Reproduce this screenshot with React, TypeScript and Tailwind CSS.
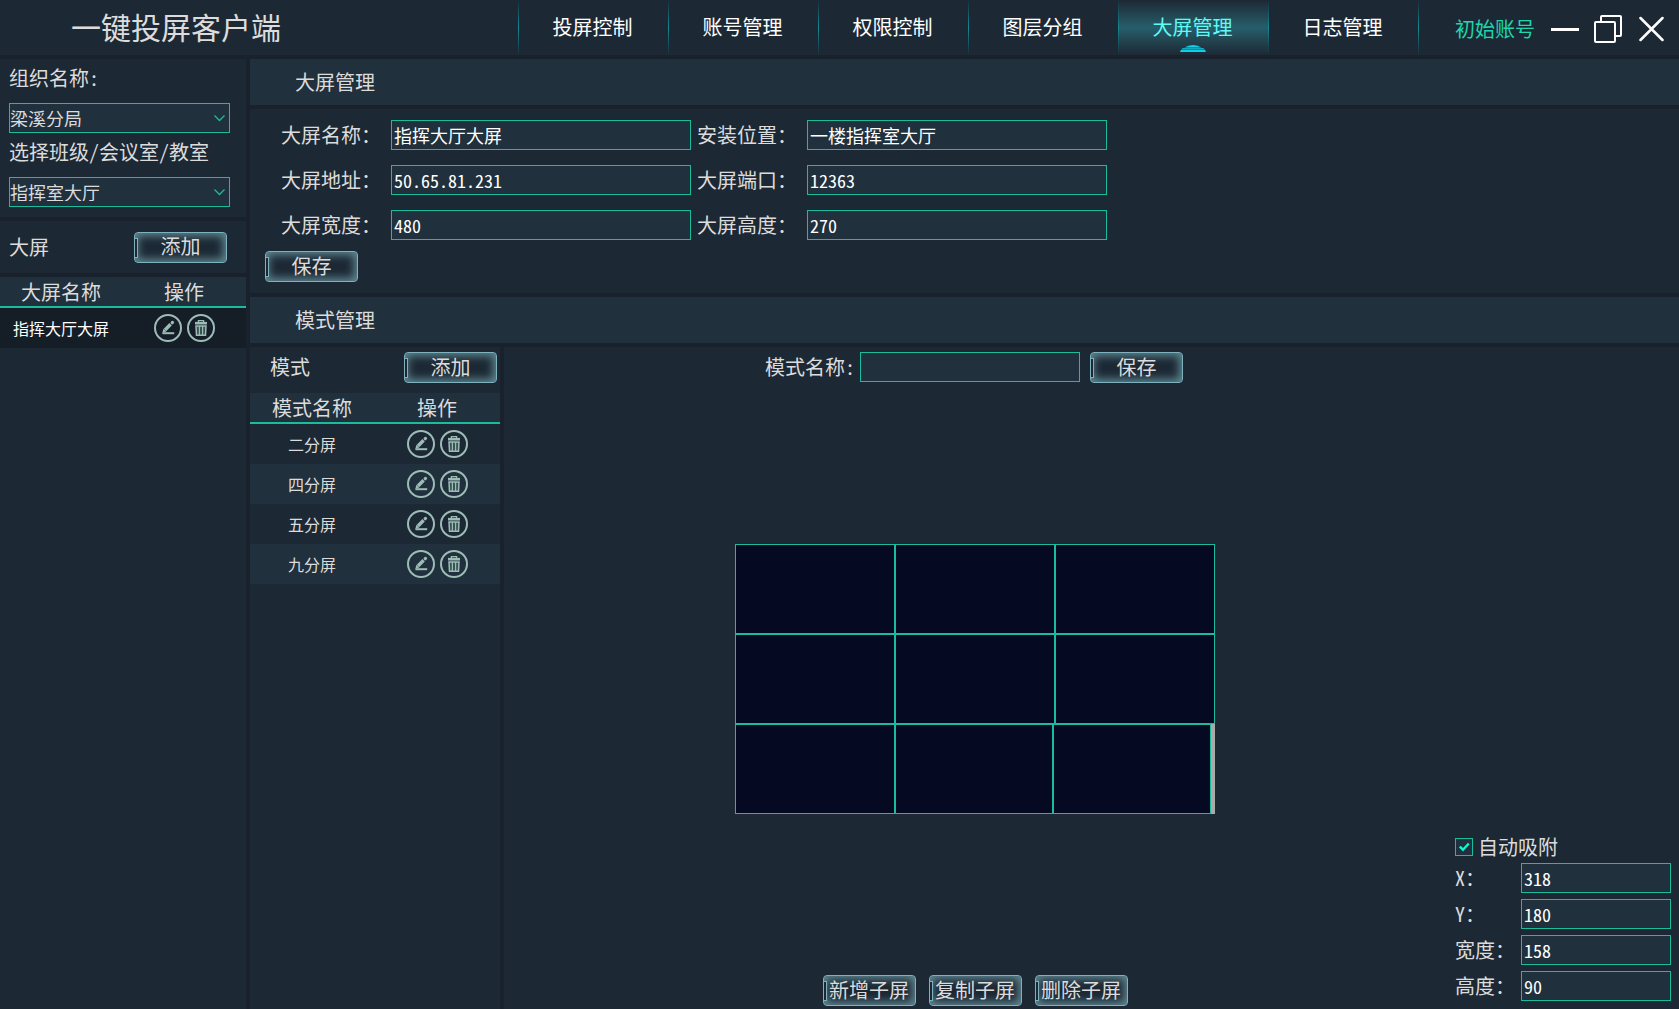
import { useState } from "react";
import type { ReactNode } from "react";
import clsx from "clsx";

const tabs = ["投屏控制", "账号管理", "权限控制", "图层分组", "大屏管理", "日志管理"];
const modes = ["二分屏", "四分屏", "五分屏", "九分屏"];

// widths of the sub screens, row by row
const wall = [
  [160, 160, 160],
  [160, 160, 160],
  [160, 158, 158],
];

function FrameButton({ children }: { children: ReactNode }) {
  return (
    <button
      type="button"
      className="relative h-[31px] w-[93px] shrink-0 whitespace-nowrap rounded-sm border border-[#7fb2bf] pb-0.5 text-[20px] leading-none shadow-[inset_0_0_9px_3px_#5f8791]"
    >
      <span className="absolute -left-px top-[5px] h-5 w-1 border border-[#7fb2bf] bg-[#1c2834]" />
      {children}
    </button>
  );
}

function EditIcon() {
  return (
    <svg width="28" height="28" viewBox="0 0 28 28" fill="none" stroke="#9dbcb6">
      <circle cx="14" cy="14" r="13" strokeWidth="2" />
      <path d="M8.4 19.2h11.8" strokeWidth="2" />
      <path d="M11 16l5.600-5.800" strokeWidth="3.400" />
      <path d="M18.200 8.700l.3-.3" strokeWidth="3.200" strokeLinecap="round" />
      <path d="M8.400 18.800l1-4 3 2.800z" fill="#9dbcb6" stroke="none" />
    </svg>
  );
}

function TrashIcon() {
  return (
    <svg width="28" height="28" viewBox="0 0 28 28" fill="none" stroke="#9dbcb6">
      <circle cx="14" cy="14" r="13" strokeWidth="2" />
      <path d="M8 9.2h12" strokeWidth="2.600" />
      <path d="M11.400 8.200V6.600h5.200v1.600" strokeWidth="1.300" />
      <path d="M9 11.900h10l-.5 9.300h-9z" strokeWidth="1.500" fill="#3a5256" />
      <path d="M12.400 12v9M15.600 12v9" strokeWidth="1.200" />
    </svg>
  );
}

function RowActions() {
  return (
    <div className="flex gap-[5px]">
      <button type="button" aria-label="编辑">
        <EditIcon />
      </button>
      <button type="button" aria-label="删除">
        <TrashIcon />
      </button>
    </div>
  );
}

function Field({ id, label, value }: { id: string; label: string; value: string }) {
  return (
    <div className="flex h-[30px] items-center">
      <label htmlFor={id} className="w-[110px] shrink-0 text-[20px]">
        {label}
      </label>
      <input
        id={id}
        defaultValue={value}
        className="h-[30px] w-[300px] border border-[#1abc9c] bg-[#20303d] px-0.5 text-[18px] text-white outline-none"
      />
    </div>
  );
}

function SideSelect({ id, label, value }: { id: string; label: string; value: string }) {
  return (
    <div className="flex flex-col">
      <label htmlFor={id} className="flex h-11 items-center pb-1.5 text-[20px]">
        {label}
      </label>
      <div className="relative">
        <select
          id={id}
          className="h-[30px] w-full appearance-none border border-[#1abc9c] bg-[#20303d] text-[18px] outline-none"
        >
          <option>{value}</option>
        </select>
        <svg className="pointer-events-none absolute right-[5px] top-3" width="11" height="7" fill="none" stroke="#1abc9c" strokeWidth="1.300">
          <path d="M.5.5l5 5 5-5" />
        </svg>
      </div>
    </div>
  );
}

function SectionTitle({ children }: { children: ReactNode }) {
  return (
    <h2 className="flex h-[46px] items-center bg-[#20303d] pl-[45px] text-[20px]">{children}</h2>
  );
}

export default function App() {
  const [snap, setSnap] = useState(true);

  return (
    <div className="flex min-h-screen flex-col gap-1 bg-[#19222c] font-['Noto_Sans_Mono_CJK_SC','Noto_Sans_CJK_SC',sans-serif] font-light leading-none text-[#dcdcdc]">
      <header className="flex h-[55px] items-center bg-[#1c2935]">
        <h1 className="flex-1 pb-1 pl-[71px] text-[30px]">一键投屏客户端</h1>
        <nav className="flex h-full text-[20px] text-white">
          {tabs.map((tab) => (
            <a
              key={tab}
              href="#"
              className={clsx(
                "relative flex w-[150px] items-center justify-center border-l pb-0.5 pr-0.5 [border-image:linear-gradient(#1c2935,#128a94,#1c2935)_1]",
                tab === "大屏管理" &&
                  "bg-linear-to-b from-[#1c2935] via-[#245f6b] to-[#1c2935] text-[#5ffaf5]"
              )}
            >
              {tab}
              {tab === "大屏管理" && (
                <svg className="absolute bottom-[3px] left-[61px]" width="26" height="7" viewBox="0 0 26 7" fill="#10d0e8">
                  <path d="M4.500 2.500Q8 0 13 0t8.500 2.500zM2.500 3.200h21l1 1h-23zM1 4.800h24l1 2.200H0z" />
                </svg>
              )}
            </a>
          ))}
        </nav>
        <div className="flex h-full w-[261px] items-center border-l pl-9 pt-0.5 [border-image:linear-gradient(#1c2935,#128a94,#1c2935)_1]">
          <span className="text-[20px] text-[#1fd6ae]">初始账号</span>
          <button type="button" aria-label="最小化" className="ml-4">
            <svg width="28" height="28" stroke="#fff" strokeWidth="3">
              <path d="M0 14.500h28" />
            </svg>
          </button>
          <button type="button" aria-label="还原" className="ml-[15px]">
            <svg width="28" height="28" fill="none" stroke="#fff" strokeWidth="2">
              <rect x="1" y="7" width="20" height="20" rx="1" />
              <path d="M7 7V2q0-1 1-1h18q1 0 1 1v18q0 1-1 1h-5" />
            </svg>
          </button>
          <button type="button" aria-label="关闭" className="ml-[17px]">
            <svg width="25" height="26" stroke="#fff" strokeWidth="2.500" strokeLinecap="round">
              <path d="M1.500 2l22 22M23.500 2l-22 22" />
            </svg>
          </button>
        </div>
      </header>

      <div className="flex flex-1 gap-1">
        <aside className="flex w-[246px] shrink-0 flex-col gap-1">
          <div className="h-[158px] bg-[#1c2935] pl-[9px] pr-4">
            <SideSelect id="org" label="组织名称:" value="梁溪分局" />
            <SideSelect id="room" label="选择班级/会议室/教室" value="指挥室大厅" />
          </div>
          <div className="flex h-[52px] items-center justify-between bg-[#1c2935] pl-[9px] pr-[19px] text-[20px]">
            大屏
            <FrameButton>添加</FrameButton>
          </div>
          <div className="flex-1 bg-[#1c2935]">
            <table className="w-full table-fixed border-separate border-spacing-0">
              <thead>
                <tr className="bg-[#20303d] text-left text-[20px]">
                  <th className="h-[31px] w-[154px] border-b-2 border-[#1abc9c] pl-[21px] font-light">
                    大屏名称
                  </th>
                  <th className="border-b-2 border-[#1abc9c] pl-[10px] font-light">操作</th>
                </tr>
              </thead>
              <tbody>
                <tr className="h-10 bg-[#151e27] text-[16px] text-white">
                  <td className="pl-[13px]">指挥大厅大屏</td>
                  <td>
                    <RowActions />
                  </td>
                </tr>
              </tbody>
            </table>
          </div>
        </aside>

        <main className="flex min-w-0 flex-1 flex-col gap-1">
          <SectionTitle>大屏管理</SectionTitle>
          <form className="h-[184px] bg-[#1c2935] pt-[11px]">
            <div className="grid grid-cols-[410px_410px] gap-x-1.5 gap-y-[15px] pl-[31px]">
              <Field id="name" label="大屏名称：" value="指挥大厅大屏" />
              <Field id="place" label="安装位置：" value="一楼指挥室大厅" />
              <Field id="addr" label="大屏地址：" value="50.65.81.231" />
              <Field id="port" label="大屏端口：" value="12363" />
              <Field id="w" label="大屏宽度：" value="480" />
              <Field id="h" label="大屏高度：" value="270" />
            </div>
            <div className="pl-[15px] pt-[11px]">
              <FrameButton>保存</FrameButton>
            </div>
          </form>
          <SectionTitle>模式管理</SectionTitle>

          <div className="flex flex-1 gap-1">
            <section className="w-[250px] shrink-0 bg-[#1c2935]">
              <div className="flex h-[46px] items-start justify-between pl-5 pr-[3px] pt-[5px] text-[20px]">
                <span className="leading-[30px]">模式</span>
                <FrameButton>添加</FrameButton>
              </div>
              <table className="w-full table-fixed border-separate border-spacing-0">
                <thead>
                  <tr className="bg-[#20303d] text-left text-[20px]">
                    <th className="h-[31px] w-[157px] border-b-2 border-[#1abc9c] pl-[22px] font-light">
                      模式名称
                    </th>
                    <th className="border-b-2 border-[#1abc9c] pl-[10px] font-light">操作</th>
                  </tr>
                </thead>
                <tbody>
                  {modes.map((mode) => (
                    <tr key={mode} className="h-10 text-[16px] even:bg-[#20303d]">
                      <td className="pl-[38px]">{mode}</td>
                      <td>
                        <RowActions />
                      </td>
                    </tr>
                  ))}
                </tbody>
              </table>
            </section>

            <section className="flex flex-1 bg-[#1c2935]">
              <div className="flex flex-1 flex-col items-center justify-between pb-[3px] pt-[5px]">
                <form className="flex items-start pr-0.5">
                  <label htmlFor="mode" className="w-[95px] text-[20px] leading-[30px]">
                    模式名称:
                  </label>
                  <input
                    id="mode"
                    className="mr-[10px] h-[30px] w-[220px] border border-[#1abc9c] bg-[#20303d] px-0.5 text-[18px] text-white outline-none"
                  />
                  <FrameButton>保存</FrameButton>
                </form>
                <div className="w-[480px] bg-[#a9a9a9]">
                  {wall.map((row, y) => (
                    <div key={y} className="flex h-[90px]">
                      {row.map((width, x) => (
                        <div key={x} className="border border-[#1abc9c] bg-[#050922]" style={{ width }} />
                      ))}
                    </div>
                  ))}
                </div>
                <div className="flex gap-[13px]">
                  <FrameButton>新增子屏</FrameButton>
                  <FrameButton>复制子屏</FrameButton>
                  <FrameButton>删除子屏</FrameButton>
                </div>
              </div>

              <div className="flex w-[233px] flex-col justify-end gap-1.5 pb-2 pl-[9px] pr-2">
                <label className="flex items-center gap-[5px] text-[20px]">
                  <span className="relative flex size-[18px]">
                    <input
                      type="checkbox"
                      checked={snap}
                      onChange={(e) => setSnap(e.target.checked)}
                      className="size-[18px] appearance-none border border-[#1abc9c] bg-[#20303d]"
                    />
                    {snap && (
                      <svg className="pointer-events-none absolute left-1 top-1" width="11" height="10" fill="none" stroke="#0ff5cd" strokeWidth="2.400">
                        <path d="M.8 4.500l3.200 3.200L9.800 1.500" />
                      </svg>
                    )}
                  </span>
                  自动吸附
                </label>
                {[
                  ["x", "X：", "318"],
                  ["y", "Y：", "180"],
                  ["sw", "宽度：", "158"],
                  ["sh", "高度：", "90"],
                ].map(([id, label, value]) => (
                  <div key={id} className="flex items-center">
                    <label htmlFor={id} className="w-[66px] shrink-0 text-[20px]">
                      {label}
                    </label>
                    <input
                      id={id}
                      defaultValue={value}
                      className="h-[30px] w-[150px] border border-[#1abc9c] bg-[#20303d] px-0.5 text-[18px] text-white outline-none"
                    />
                  </div>
                ))}
              </div>
            </section>
          </div>
        </main>
      </div>
    </div>
  );
}
